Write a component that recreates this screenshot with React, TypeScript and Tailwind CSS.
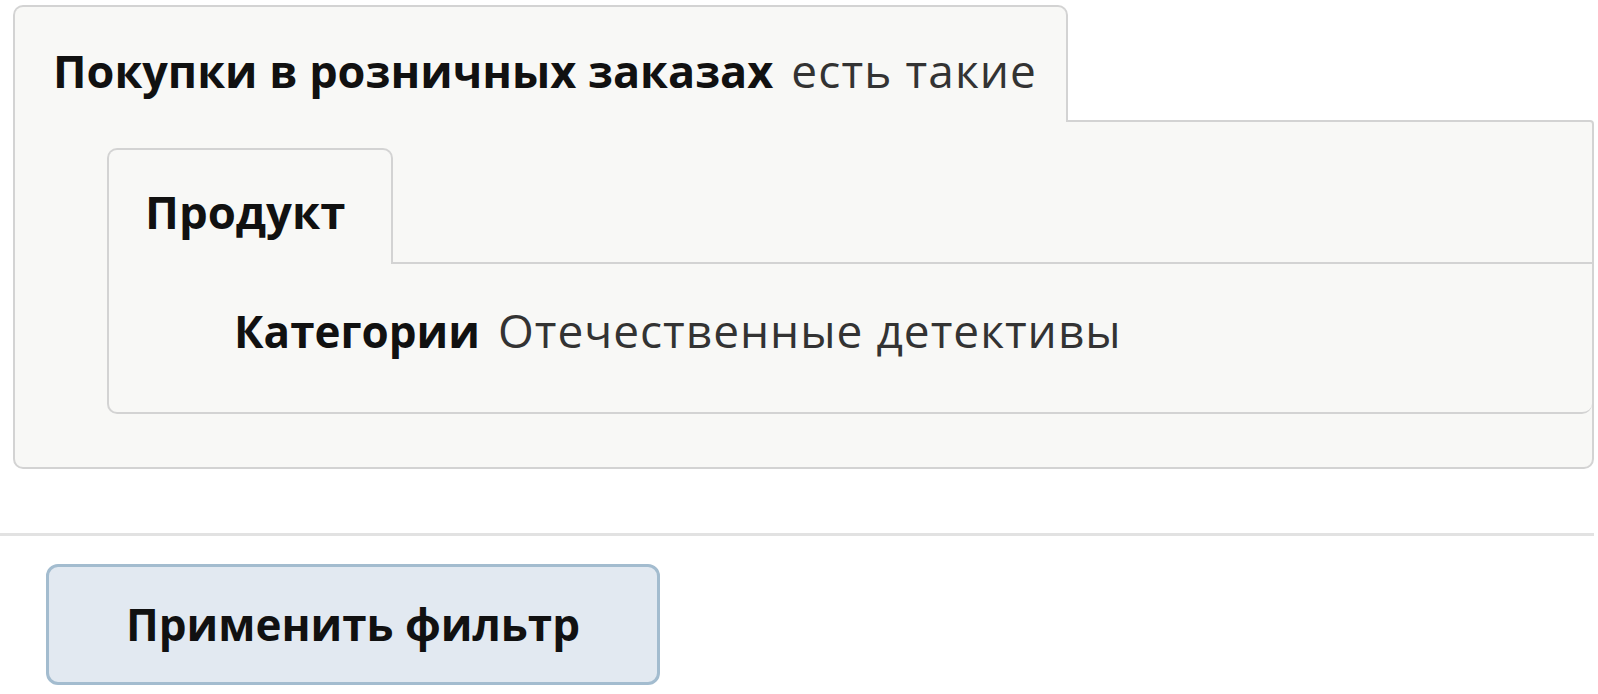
export default function App() {
  return (
    <div className="h-[694px] w-full overflow-hidden bg-white font-['Open_Sans',sans-serif] text-[#1a1a1a]">
      <div className="pl-[13px] pr-[4px] pt-[5px]">
        {/* outer condition block */}
        <div className="flex items-end">
          <div className="relative z-10 -mb-[2px] flex h-[117px] items-center rounded-t-[10px] border-2 border-b-0 border-[#d3d3d3] bg-[#f8f8f6] pl-[38px] pr-[29px] pt-[10px]">
            <span className="leading-none">
              <b className="text-[45px] font-bold text-[#111]">Покупки в розничных заказах</b>
              <span className="ml-[5px] text-[46px] tracking-[0.024em] text-[#333]"> есть такие</span>
            </span>
          </div>
          <div className="flex-1" />
        </div>
        <div className="rounded-b-[10px] rounded-tr-[4px] border-2 border-[#d3d3d3] bg-[#f8f8f6] pb-[53px] pl-[92px] pt-[26px]">
          <div className="flex items-end">
            <div className="relative z-10 -mb-[2px] flex h-[116px] items-center rounded-t-[10px] border-2 border-b-0 border-[#d3d3d3] bg-[#f8f8f6] pl-[36px] pr-[46px] pt-[10px]">
              <span className="text-[45.5px] font-bold leading-none text-[#111]">Продукт</span>
            </div>
            <div className="flex-1" />
          </div>
          <div className="flex h-[152px] items-center rounded-b-[10px] border-2 border-r-0 border-[#d3d3d3] bg-[#f8f8f6] pb-[16px] pl-[125px]">
            <span className="leading-none">
              <b className="text-[44px] font-bold text-[#111]">Категории</b>
              <span className="ml-[5px] text-[46px] tracking-[0.022em] text-[#333]"> Отечественные детективы</span>
            </span>
          </div>
        </div>
      </div>

      <div className="mt-[64px] h-[3px] w-[1594px] bg-[#e2e2e2]" />

      <div className="pl-[46px] pt-[28px]">
        <button className="flex h-[121px] w-[614px] items-center justify-center rounded-[12px] border-[3px] border-[#a3bccf] bg-[#e2e9f1] pb-[2px] text-[44px] font-bold leading-none text-[#111]">
          Применить фильтр
        </button>
      </div>
    </div>
  );
}
